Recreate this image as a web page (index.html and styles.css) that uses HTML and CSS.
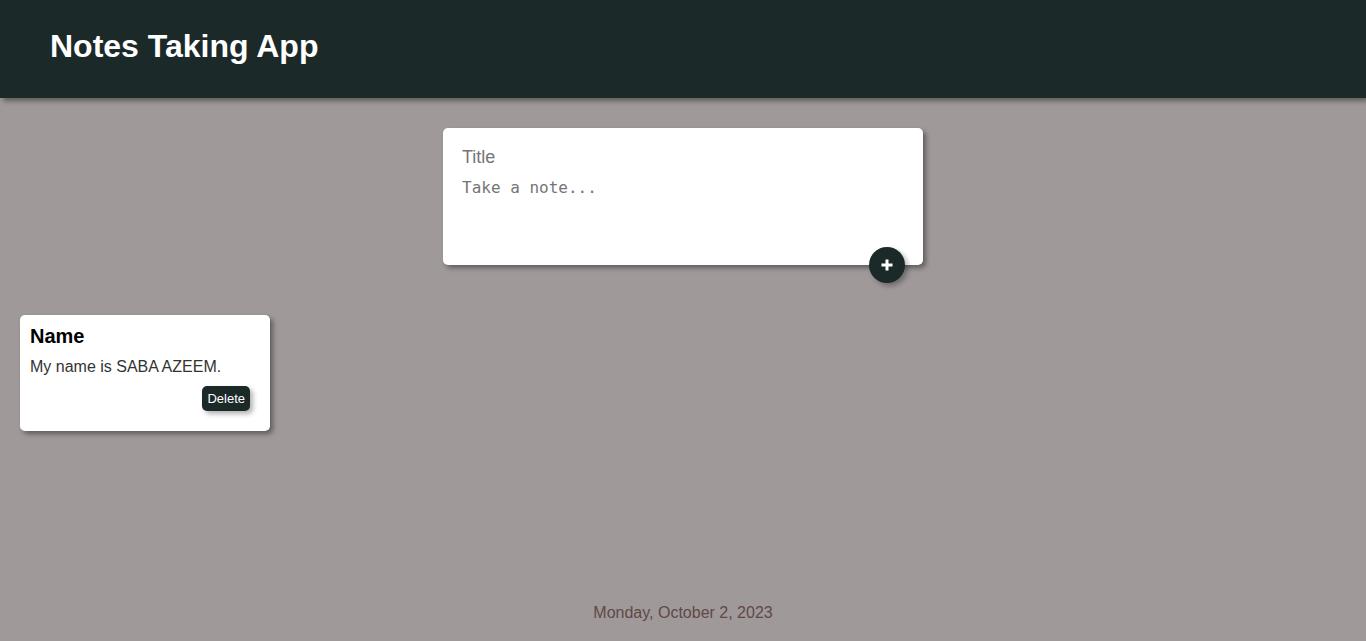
FILE: index.html
```html
<!DOCTYPE html>
<html lang="en">
<head>
<meta charset="utf-8">
<title>Notes Taking App</title>
<link rel="stylesheet" href="styles.css">
</head>
<body>
<header class="header"><h1 class="brand">Notes Taking App</h1></header>
<main class="main">
  <form class="composer">
    <input class="field title-field" type="text" placeholder="Title" aria-label="Title">
    <textarea class="field note-field" rows="3" placeholder="Take a note..." aria-label="Note"></textarea>
    <button class="add" type="button" aria-label="Add note">
      <svg viewBox="0 0 12 12" width="12" height="12" aria-hidden="true"><path d="M4.500 .5h3v4h4v3h-4v4h-3v-4h-4v-3h4z" fill="#fff"/></svg>
    </button>
  </form>
  <section class="notes">
    <article class="note">
      <h2 class="note-title">Name</h2>
      <p class="note-text">My name is SABA AZEEM.</p>
      <button class="delete" type="button">Delete</button>
    </article>
  </section>
</main>
<footer class="footer"><p class="date">Monday, October 2, 2023</p></footer>
</body>
</html>
```
FILE: styles.css
```css
* { box-sizing: border-box; margin: 0; padding: 0; }
body {
  min-height: 100vh;
  display: flex;
  flex-direction: column;
  background: #a09999;
  font-family: "Liberation Sans", Arial, sans-serif;
  font-size: 16px;
}
.header {
  padding: 28px 50px 34px;
  background: #1c2929;
  box-shadow: 3px 3px 5px rgba(0, 0, 0, 0.4);
}
.brand { color: #fff; font-size: 32px; line-height: 36px; }
.main { flex: 1; padding: 30px 20px; }
.composer {
  position: relative;
  width: 100%;
  max-width: 480px;
  margin: 0 auto;
  padding: 15px;
  background: #fff;
  border-radius: 5px;
  box-shadow: 3px 3px 5px rgba(0, 0, 0, 0.4);
}
.field {
  display: block;
  width: 100%;
  padding: 4px;
  border: 0;
  outline: 0;
  background: transparent;
  font-size: 18px;
  resize: none;
}
.field::placeholder { color: #757575; }
.title-field { height: 29px; font-family: inherit; }
.note-field { height: 78px; font-family: "DejaVu Sans Mono", monospace; font-size: 16px; line-height: 24px; }
.add {
  position: absolute;
  right: 18px;
  bottom: -18px;
  display: grid;
  place-items: center;
  width: 36px;
  height: 36px;
  border: 0;
  border-radius: 50%;
  background: #1c2929;
  box-shadow: 3px 3px 5px rgba(0, 0, 0, 0.3);
}
.notes { display: flex; flex-wrap: wrap; gap: 20px; margin-top: 50px; }
.note {
  display: flex;
  flex-direction: column;
  width: 250px;
  padding: 10px 10px 20px;
  background: #fff;
  border-radius: 5px;
  box-shadow: 3px 3px 5px rgba(0, 0, 0, 0.4);
}
.note-title { margin-bottom: 10px; font-size: 20px; line-height: 22px; }
.note-text { margin-bottom: 10px; color: #333; line-height: 19px; }
.delete {
  align-self: flex-end;
  margin-right: 10px;
  padding: 5px;
  border: 0;
  border-radius: 5px;
  background: #1c2929;
  color: #fff;
  font-family: inherit;
  font-size: 13px;
  line-height: 15px;
  box-shadow: 3px 3px 5px rgba(0, 0, 0, 0.3);
}
.footer { padding: 0 20px 20px; text-align: center; }
.date { color: #5f4848; line-height: 17px; }
```
